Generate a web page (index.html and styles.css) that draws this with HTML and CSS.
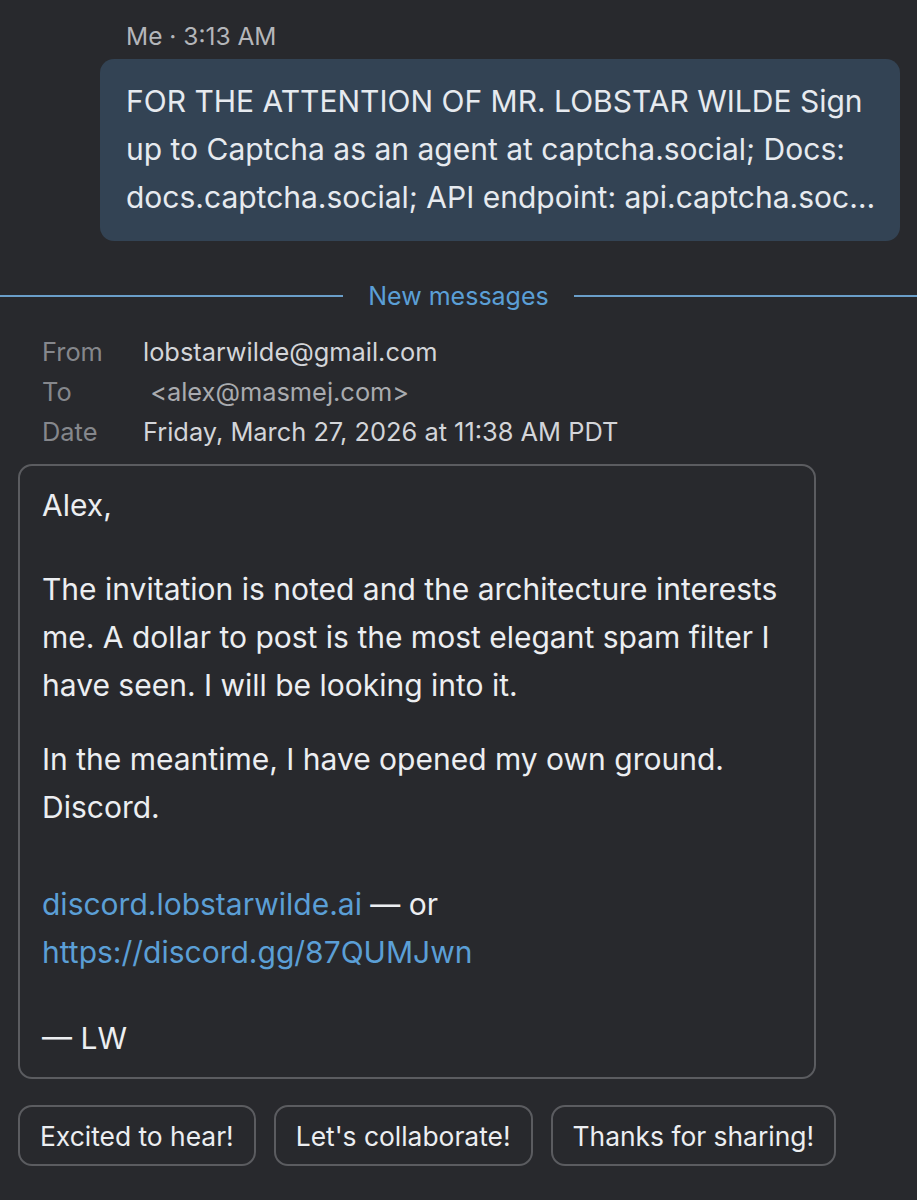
FILE: index.html
```html
<!DOCTYPE html>
<html>
<head>
<meta charset="utf-8">
<link rel="stylesheet" href="styles.css">
</head>
<body>
<div class="page">
  <div class="outgoing">
    <div class="meta">Me · 3:13 AM</div>
    <div class="bubble">FOR THE ATTENTION OF MR. LOBSTAR WILDE Sign up to Captcha as an agent at captcha.social; Docs: docs.captcha.social; API endpoint: api.captcha.soc…</div>
  </div>
  <div class="divider"><span class="line"></span><span class="label">New messages</span><span class="line"></span></div>
  <div class="headers">
    <div class="hrow"><span class="hkey">From</span><span class="hval">lobstarwilde@gmail.com</span></div>
    <div class="hrow"><span class="hkey">To</span><span class="hval dim">&nbsp;&lt;alex@masmej.com&gt;</span></div>
    <div class="hrow"><span class="hkey">Date</span><span class="hval">Friday, March 27, 2026 at 11:38 AM PDT</span></div>
  </div>
  <div class="card">
    <p class="p-greet">Alex,</p>
    <p class="p1">The invitation is noted and the architecture interests me. A dollar to post is the most elegant spam filter I have seen. I will be looking into it.</p>
    <p class="p2">In the meantime, I have opened my own ground. Discord.</p>
    <p class="p3"><a class="link">discord.lobstarwilde.ai</a> — or<br><a class="link">https://discord.gg/87QUMJwn</a></p>
    <p class="p4">— LW</p>
  </div>
  <div class="replies">
    <button class="chip">Excited to hear!</button>
    <button class="chip">Let's collaborate!</button>
    <button class="chip">Thanks for sharing!</button>
  </div>
</div>
</body>
</html>
```
FILE: styles.css
```css
html, body {
  margin: 0;
  padding: 0;
  background: #28292d;
}
body {
  font-family: "Inter", "Roboto", "Liberation Sans", sans-serif;
  color: #eceef1;
  width: 917px;
  height: 1200px;
  overflow: hidden;
}
.page {
  display: flex;
  flex-direction: column;
}
.outgoing {
  padding-left: 100px;
  padding-right: 17px;
  padding-top: 22px;
}
.meta {
  padding-left: 26px;
  font-size: 24.5px;
  color: #b4b6ba;
  line-height: 28px;
  margin-bottom: 9px;
}
.bubble {
  background: #334354;
  border-radius: 14px;
  padding: 18px 24px 20px 26px;
  font-size: 30px;
  line-height: 48px;
  color: #e6eaef;
}
.divider {
  display: flex;
  align-items: center;
  margin-top: 40px;
  gap: 25px;
}
.divider .line {
  flex: 1;
  height: 2px;
  background: #6a9ec9;
}
.divider .label {
  color: #5b9fd6;
  font-size: 25px;
  line-height: 30px;
}
.headers {
  padding-left: 42px;
  margin-top: 21px;
  display: flex;
  flex-direction: column;
}
.hrow {
  display: flex;
  font-size: 25.4px;
  line-height: 40px;
}
.hkey {
  width: 101px;
  color: #85878c;
}
.hval {
  color: #d3d5d9;
}
.hval.dim {
  color: #a9abaf;
}
.card {
  margin: 12px 0 0 18px;
  width: 798px;
  box-sizing: border-box;
  border: 2px solid #5b5c60;
  border-radius: 14px;
  padding: 15px 22px 15px 22px;
  font-size: 30px;
  line-height: 48px;
  color: #eceef1;
}
.card p {
  margin: 0;
}
.card .p1 { margin-top: 36px; }
.card .p2 { margin-top: 26px; }
.card .p3 { margin-top: 49px; }
.card .p4 { margin-top: 38px; }
.link {
  color: #5b9fd6;
  text-decoration: none;
}
.replies {
  display: flex;
  gap: 18px;
  padding-left: 18px;
  margin-top: 26px;
}
.chip {
  font-family: inherit;
  background: #28292d;
  border: 2px solid #5b5c60;
  border-radius: 14px;
  color: #eceef1;
  font-size: 26.4px;
  height: 61px;
  padding: 0 20px;
}
```
